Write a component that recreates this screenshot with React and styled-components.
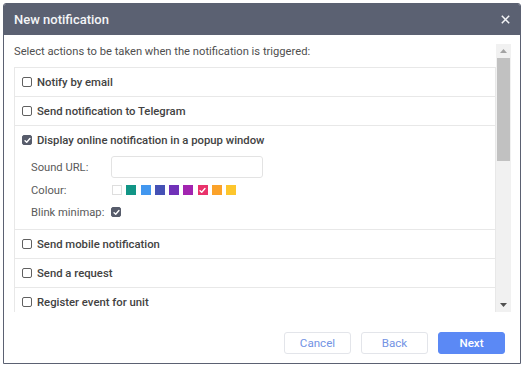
import React from 'react';
import styled, { createGlobalStyle } from 'styled-components';

const GlobalStyle = createGlobalStyle`
  html, body {
    margin: 0;
    padding: 0;
    background: #ffffff;
  }
  body {
    font-family: Roboto, "Liberation Sans", Arial, sans-serif;
  }
`;

const Page = styled.div`
  padding: 3px;
`;

const Dialog = styled.div`
  box-sizing: border-box;
  width: 518px;
  height: 361px;
  border: 1px solid #5b6172;
  border-radius: 3px 3px 0 0;
  background: #fff;
  display: flex;
  flex-direction: column;
  overflow: hidden;
`;

const Header = styled.div`
  height: 31px;
  flex: none;
  background: #5b6172;
  display: flex;
  align-items: center;
  justify-content: space-between;
  padding: 0 10px 0 10px;
`;

const Title = styled.h2`
  margin: 0;
  font-size: 13px;
  font-weight: 500;
  color: #f4f5f7;
`;

const Close = styled.button`
  border: none;
  background: none;
  padding: 0;
  width: 10px;
  height: 10px;
  display: flex;
  align-items: center;
  justify-content: center;
  cursor: pointer;
`;

const Body = styled.div`
  flex: none;
  height: 268px;
  margin: 9px 9px 0 10px;
  display: flex;
`;

const Scroller = styled.div`
  flex: 1;
  overflow: hidden;
`;

const ScrollBar = styled.div`
  width: 15px;
  flex: none;
  background: #f1f1f1;
  display: flex;
  flex-direction: column;
`;

const Arrow = styled.div`
  height: 14px;
  flex: none;
  display: flex;
  align-items: center;
  justify-content: center;
`;

const Thumb = styled.div`
  height: 103px;
  margin: 0 1px;
  background: #c1c1c1;
`;

const Spacer = styled.div`
  flex: 1;
`;

const Intro = styled.p`
  margin: 0;
  height: 23px;
  padding-top: 1px;
  box-sizing: border-box;
  font-size: 11.2px;
  color: #4f4f4f;
  line-height: 13px;
`;

const List = styled.div`
  border: 1px solid #e8e8e8;
  border-bottom: none;
`;

const Row = styled.div`
  border-bottom: 1px solid #e8e8e8;
  padding: 0 0 0 7px;
`;

const RowHead = styled.label`
  height: 28px;
  display: flex;
  align-items: center;
  gap: 5px;
  font-size: 11.3px;
  font-weight: 500;
  color: #424242;
`;

const Box = styled.span`
  box-sizing: border-box;
  width: 10px;
  height: 10px;
  flex: none;
  border-radius: 2px;
  border: 1px solid ${p => (p.checked ? '#575c6b' : '#606060')};
  background: ${p => (p.checked ? '#575c6b' : '#fff')};
  display: flex;
  align-items: center;
  justify-content: center;
`;

const Details = styled.div`
  display: grid;
  grid-template-columns: 80px auto;
  padding: 0 0 5px 9px;
`;

const Field = styled.div`
  height: ${p => p.h}px;
  display: flex;
  align-items: center;
  font-size: 11.2px;
  color: #5a5a5a;
  white-space: nowrap;
`;

const Input = styled.div`
  box-sizing: border-box;
  width: 152px;
  height: 22px;
  border: 1px solid #e3e3e3;
  border-radius: 3px;
`;

const Swatches = styled.div`
  display: flex;
  gap: 4.3px;
  padding-left: 1px;
`;

const Swatch = styled.span`
  box-sizing: border-box;
  width: 10px;
  height: 10px;
  background: ${p => p.color};
  border: ${p => (p.color === '#ffffff' ? '1px solid #dedede' : 'none')};
  display: flex;
  align-items: center;
  justify-content: center;
`;

const Footer = styled.div`
  flex: 1;
  display: flex;
  align-items: center;
  justify-content: flex-end;
  gap: 10px;
  padding: 11px 15px 0 0;
`;

const Button = styled.button`
  box-sizing: border-box;
  width: 67px;
  height: 22px;
  border-radius: 3px;
  font-family: Roboto, "Liberation Sans", Arial, sans-serif;
  font-size: 11.6px;
  cursor: pointer;
  border: 1px solid ${p => (p.primary ? '#5b89f5' : '#e3e5ea')};
  background: ${p => (p.primary ? '#5b89f5' : '#fff')};
  color: ${p => (p.primary ? '#ffffff' : '#7393e4')};
  font-weight: ${p => (p.primary ? 500 : 400)};
`;

const Check = ({ size = 7 }) => (
  <svg width={size} height={size} viewBox="0 0 8 8">
    <path d="M1.2 4.2 L3.1 6 L6.8 1.8" fill="none" stroke="#fff" strokeWidth="1.6" strokeLinecap="round" strokeLinejoin="round" />
  </svg>
);

const Checkbox = ({ checked }) => (
  <Box checked={checked}>{checked && <Check />}</Box>
);

const colours = ['#ffffff', '#129586', '#4297ef', '#4551b5', '#7131b8', '#a224b0', '#e9336b', '#fba22a', '#fdc62d'];

const actions = [
  'Notify by email',
  'Send notification to Telegram',
  'Display online notification in a popup window',
  'Send mobile notification',
  'Send a request',
  'Register event for unit',
];

export default function App() {
  return (
    <>
      <GlobalStyle />
      <Page>
        <Dialog>
          <Header>
            <Title>New notification</Title>
            <Close>
              <svg width="9" height="9" viewBox="0 0 9 9">
                <path d="M0.8 0.8 L8.2 8.2 M8.2 0.8 L0.8 8.2" stroke="#f4f5f7" strokeWidth="1.5" />
              </svg>
            </Close>
          </Header>
          <Body>
            <Scroller>
              <Intro>Select actions to be taken when the notification is triggered:</Intro>
              <List>
                {actions.map((a, i) => (
                  <Row key={a}>
                    <RowHead>
                      <Checkbox checked={i === 2} />
                      {a}
                    </RowHead>
                    {i === 2 && (
                      <Details>
                        <Field h={26}>Sound URL:</Field>
                        <Field h={26}><Input /></Field>
                        <Field h={20}>Colour:</Field>
                        <Field h={20}>
                          <Swatches>
                            {colours.map((c, j) => (
                              <Swatch key={c} color={c}>{j === 6 && <Check />}</Swatch>
                            ))}
                          </Swatches>
                        </Field>
                        <Field h={24}>Blink minimap:</Field>
                        <Field h={24}><Checkbox checked /></Field>
                      </Details>
                    )}
                  </Row>
                ))}
              </List>
            </Scroller>
            <ScrollBar>
              <Arrow>
                <svg width="7" height="4" viewBox="0 0 7 4"><polygon points="3.5,0 7,4 0,4" fill="#a3a3a3" /></svg>
              </Arrow>
              <Thumb />
              <Spacer />
              <Arrow>
                <svg width="7" height="4" viewBox="0 0 7 4"><polygon points="0,0 7,0 3.5,4" fill="#505050" /></svg>
              </Arrow>
            </ScrollBar>
          </Body>
          <Footer>
            <Button>Cancel</Button>
            <Button>Back</Button>
            <Button primary>Next</Button>
          </Footer>
        </Dialog>
      </Page>
    </>
  );
}
